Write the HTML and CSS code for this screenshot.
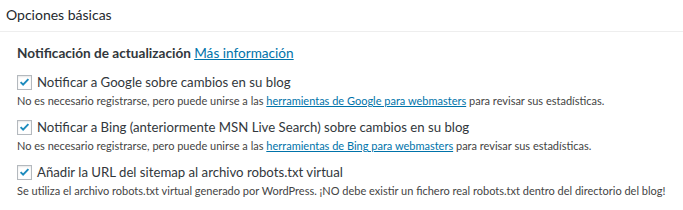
FILE: index.html
```html
<!DOCTYPE html>
<html lang="es">
<head>
    <meta charset="utf-8"/>
    <title>Opciones básicas</title>
    <link rel="stylesheet" href="styles.css">
</head>
<body>
<div class="postbox">
    <h2 class="hndle">Opciones básicas</h2>
    <div class="inside">
        <h4 class="section">Notificación de actualización <a href="#">Más información</a></h4>
        <ul class="opts">
            <li>
                <label class="opt"><span class="cb"><svg viewBox="0 0 16 16"><path d="M3.2 8.2 L6.3 11.3 L12.8 4.4" fill="none" stroke="#1e8cbe" stroke-width="2.4"/></svg></span>Notificar a Google sobre cambios en su blog</label>
                <small class="desc">No es necesario registrarse, pero puede unirse a las <a href="#">herramientas de Google para webmasters</a> para revisar sus estadísticas.</small>
            </li>
            <li>
                <label class="opt"><span class="cb"><svg viewBox="0 0 16 16"><path d="M3.2 8.2 L6.3 11.3 L12.8 4.4" fill="none" stroke="#1e8cbe" stroke-width="2.4"/></svg></span>Notificar a Bing (anteriormente MSN Live Search) sobre cambios en su blog</label>
                <small class="desc">No es necesario registrarse, pero puede unirse a las <a href="#">herramientas de Bing para webmasters</a> para revisar sus estadísticas.</small>
            </li>
            <li>
                <label class="opt"><span class="cb"><svg viewBox="0 0 16 16"><path d="M3.2 8.2 L6.3 11.3 L12.8 4.4" fill="none" stroke="#1e8cbe" stroke-width="2.4"/></svg></span>Añadir la URL del sitemap al archivo robots.txt virtual</label>
                <small class="desc">Se utiliza el archivo robots.txt virtual generado por WordPress. ¡NO debe existir un fichero real robots.txt dentro del directorio del blog!</small>
            </li>
        </ul>
    </div>
</div>
</body>
</html>
```

FILE: styles.css
```css
*{ padding:0; margin:0; box-sizing:border-box; }
body{ background:#fff; font-family:Lato, "Liberation Sans", sans-serif; color:#23282d; }
a{ color:#0073aa; }
.postbox{ width:683px; }
.hndle{ font-size:14px; font-weight:400; line-height:20px; padding:5px 6px 6px; border-bottom:1px solid #eee; }
.inside{ padding:11px 17px 0; }
.section{ font-size:13.6px; font-weight:700; line-height:20px; color:#32373c; }
.section a{ font-weight:400; }
.opts{ list-style:none; margin-top:9px; }
.opts li{ height:45px; }
.opt{ display:flex; align-items:center; height:20px; font-size:13.2px; line-height:20px; color:#32373c; }
.cb{ width:15px; height:15px; border:1px solid #b4b9be; margin-right:5px; display:flex; align-items:center; justify-content:center; box-shadow:inset 0 1px 2px rgba(0,0,0,.1); }
.cb svg{ width:14px; height:14px; }
.desc{ display:block; font-size:11px; line-height:18px; color:#444; }
```
